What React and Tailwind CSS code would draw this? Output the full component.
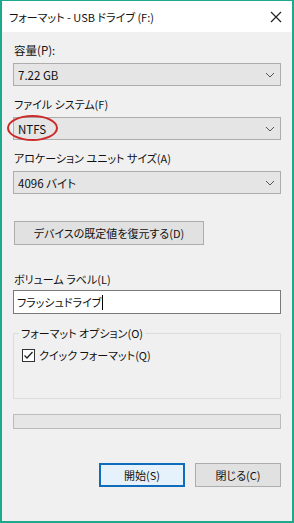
import React from "react";

const font = { fontFamily: '"Noto Sans CJK JP", "Noto Sans", sans-serif' };

function Chevron() {
  return (
    <svg width="10" height="6" viewBox="0 0 10 6" className="shrink-0">
      <path d="M1 1 L5 5 L9 1" fill="none" stroke="#555" strokeWidth="1" />
    </svg>
  );
}

function Select({ value, children }) {
  return (
    <div className="relative h-[23px] flex items-center justify-between border border-[#adadad] bg-[#e5e5e5] pl-[4px] pr-[5px]">
      <span className="text-[11.5px] leading-[16px] text-[#111]">{value}</span>
      <Chevron />
      {children}
    </div>
  );
}

export default function App() {
  return (
    <div
      style={font}
      className="w-[294px] h-[523px] flex flex-col bg-[#f0f0f0] border-l-2 border-r-2 border-b-2 border-t border-[#1ea98c] text-[#111] text-[11px] [font-feature-settings:'palt']"
    >
      {/* title bar */}
      <div className="h-[31px] shrink-0 bg-white flex items-center justify-between pl-[7px] pr-[10px]">
        <span className="text-[11px] leading-[16px]">フォーマット - USB ドライブ (F:)</span>
        <svg width="12" height="12" viewBox="0 0 12 12">
          <path d="M1 1 L11 11 M11 1 L1 11" stroke="#222" strokeWidth="1.2" />
        </svg>
      </div>

      <div className="flex flex-col px-[11px] pt-[10px]">
        <div className="text-[11.5px] leading-[16px] pl-[1px]">容量(P):</div>
        <div className="mt-[5px]">
          <Select value="7.22 GB" />
        </div>

        <div className="mt-[10px] text-[11px] leading-[16px] pl-[1px]">ファイル システム(F)</div>
        <div className="mt-[5px] relative">
          <Select value="NTFS" />
          <div className="absolute left-[-6px] top-[-2px] w-[51px] h-[26px] rounded-[50%] border-2 border-[#cc2a2a]" />
        </div>

        <div className="mt-[10px] text-[11px] leading-[16px] pl-[1px]">アロケーション ユニット サイズ(A)</div>
        <div className="mt-[5px]">
          <Select value="4096 バイト" />
        </div>

        <div className="mt-[27px]">
          <button className="w-[190px] h-[24px] ml-[1px] border border-[#adadad] bg-[#e1e1e1] text-[11px] leading-[16px] flex items-center justify-center">
            デバイスの既定値を復元する(D)
          </button>
        </div>

        <div className="mt-[26px] text-[11px] leading-[16px] pl-[1px]">ボリューム ラベル(L)</div>
        <div className="mt-[3px] h-[24px] border border-[#7a7a7a] bg-white flex items-center pl-[3px]">
          <span className="text-[11px] leading-[16px]">フラッシュドライブ</span>
          <span className="w-px h-[15px] bg-black ml-[1px]" />
        </div>

        <fieldset className="mt-[11px] h-[74px] border border-[#dcdcdc] px-[8px]">
          <legend className="text-[11px] leading-[16px] px-[2px] ml-[-3px]">フォーマット オプション(O)</legend>
          <div className="flex items-center mt-[6px]">
            <div className="w-[13px] h-[13px] border border-[#333] bg-white flex items-center justify-center">
              <svg width="11" height="11" viewBox="0 0 11 11">
                <path d="M1.5 5.5 L4 8 L9.5 2" fill="none" stroke="#222" strokeWidth="1.3" />
              </svg>
            </div>
            <span className="ml-[4px] text-[11px] leading-[16px]">クイック フォーマット(Q)</span>
          </div>
        </fieldset>

        <div className="mt-[15px] h-[15px] border border-[#bcbcbc] bg-[#e6e6e6]" />

        <div className="mt-[34px] flex justify-end gap-[10px]">
          <button className="w-[86px] h-[24px] border-2 border-[#0f6cbd] bg-[#e5f1fb] text-[11px] leading-[16px] flex items-center justify-center">
            開始(S)
          </button>
          <button className="w-[86px] h-[24px] border border-[#adadad] bg-[#e1e1e1] text-[11px] leading-[16px] flex items-center justify-center">
            閉じる(C)
          </button>
        </div>
      </div>
    </div>
  );
}
